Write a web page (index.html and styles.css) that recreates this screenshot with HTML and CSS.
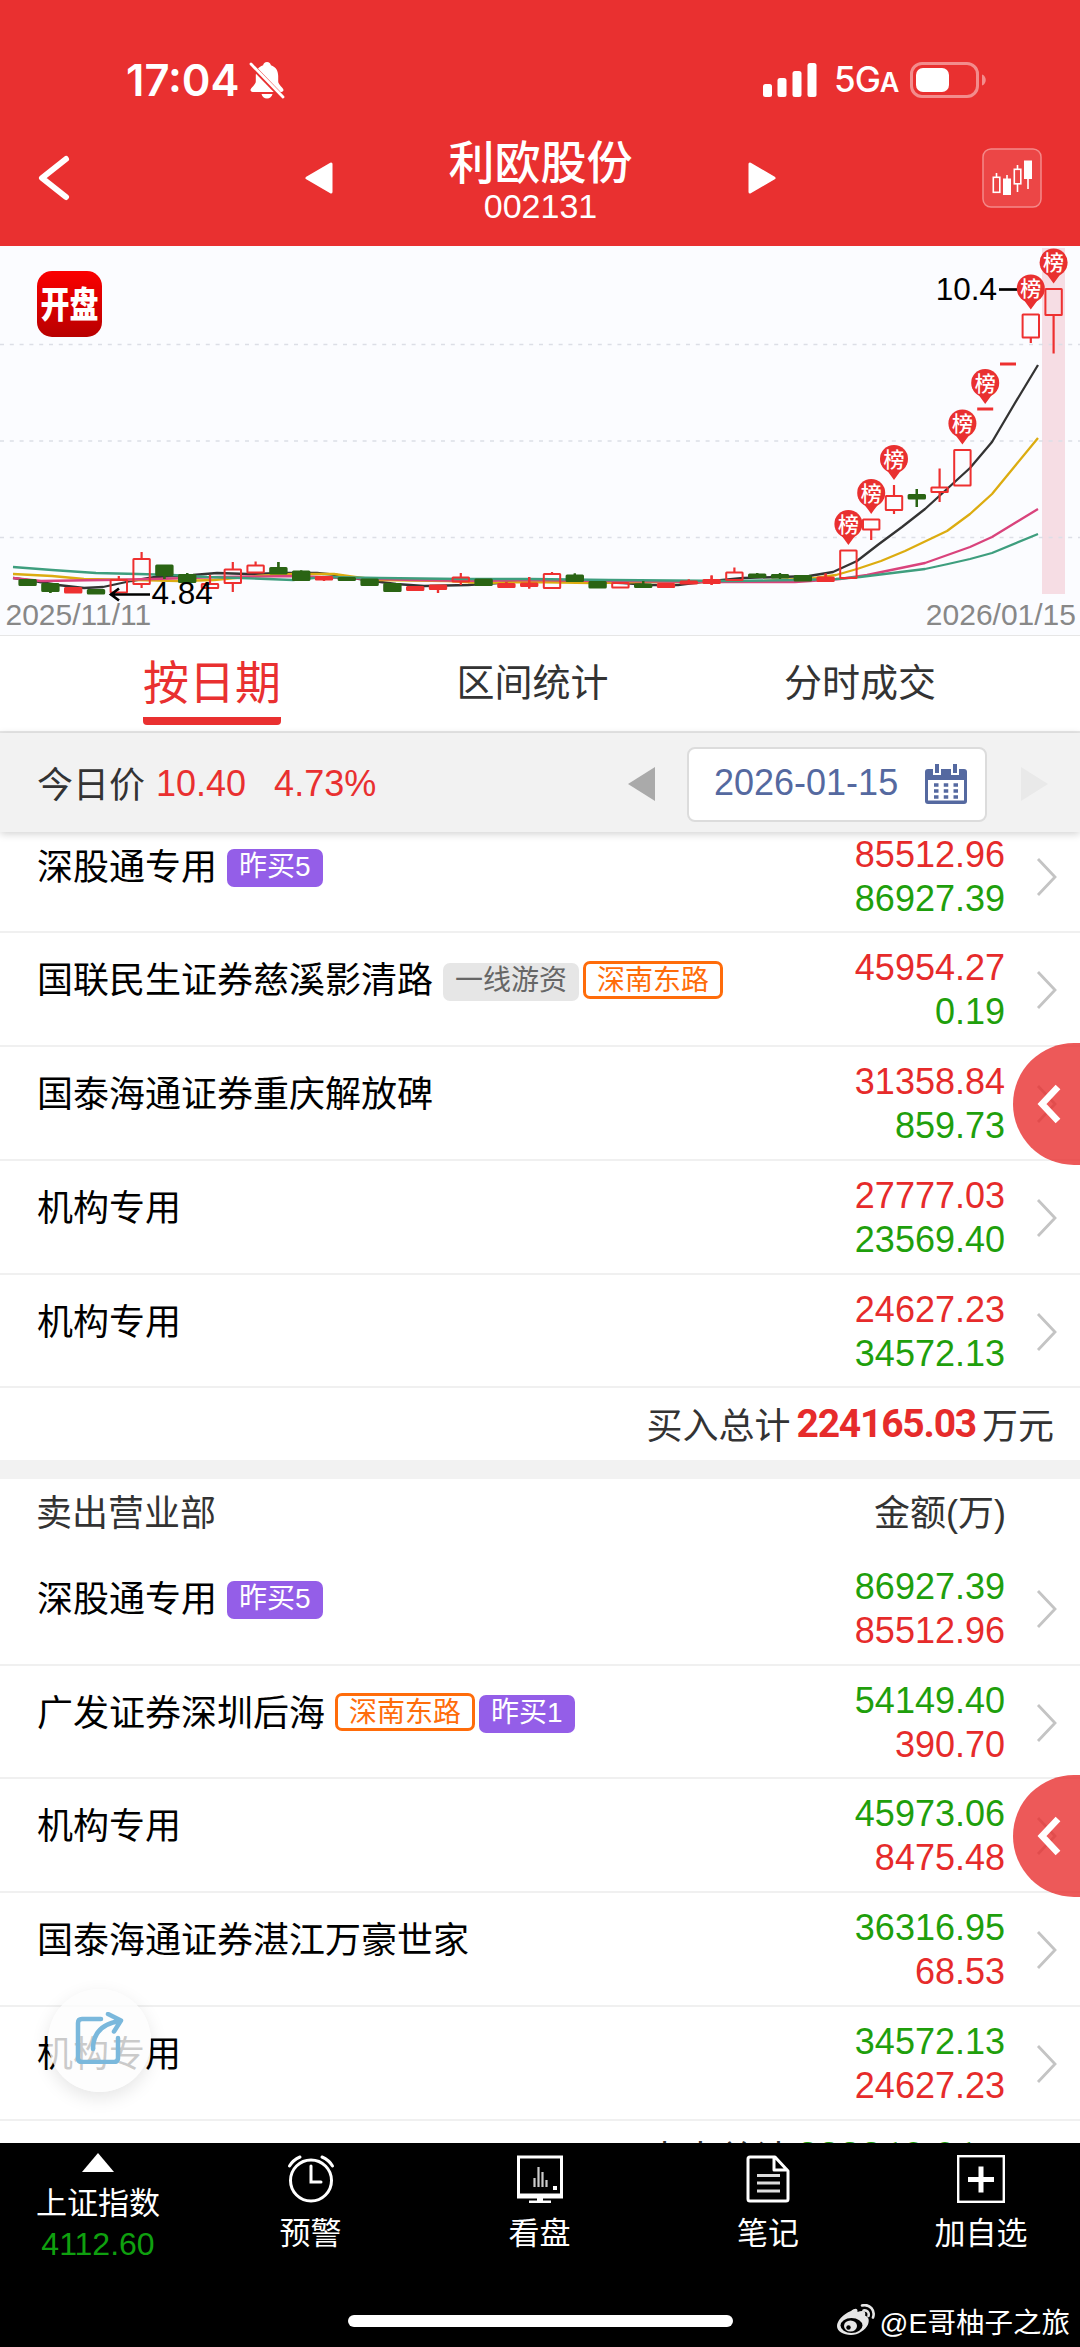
FILE: index.html
```html
<!DOCTYPE html>
<html lang="zh-CN">
<head>
  <meta charset="UTF-8" />
  <title>利欧股份 002131</title>
  <link rel="stylesheet" href="styles.css">
</head>
<body>
  <div class="screen">
    <header class="header">
      <div class="status-bar">
        <span class="time">17:04</span>
        <svg class="bell" width="36" height="38" viewBox="0 0 36 38">
          <path d="M18 1c-2.2 0-3.6 1.4-3.9 3.2C9 5.800 6.800 9.800 6.800 15v5.500c0 3-5.300 6.500-5.300 8.600 0 1.100.8 1.900 2.200 1.900h28.600c1.400 0 2.200-.8 2.200-1.900 0-2.100-5.300-5.600-5.300-8.600V15c0-5.200-2.200-9.200-7.300-10.800C21.600 2.400 20.200 1 18 1zM12.500 33c.5 2.600 2.700 4.500 5.500 4.500s5-1.900 5.500-4.500z" fill="#fff"/>
          <path d="M-1 1l36 37" stroke="#e93030" stroke-width="5"/>
          <path d="M2 3l32 33" stroke="#fff" stroke-width="2.800" stroke-linecap="round"/>
        </svg>
        <span class="spacer"></span>
        <svg width="54" height="34" viewBox="0 0 54 34" fill="#fff">
          <rect x="0" y="21" width="9" height="13" rx="2.500"/>
          <rect x="14.500" y="15" width="9" height="19" rx="2.500"/>
          <rect x="29.500" y="8" width="9" height="26" rx="2.500"/>
          <rect x="44.500" y="0" width="9" height="34" rx="2.500"/>
        </svg>
        <span class="network">5G<small>A</small></span>
        <svg class="battery" width="77" height="36" viewBox="0 0 77 36">
          <rect x="1.500" y="1.500" width="66" height="33" rx="10.500" fill="none" stroke="#f38c8c" stroke-width="3"/>
          <rect x="6" y="6" width="33" height="24" rx="7" fill="#fff"/>
          <path d="M72 12.500c5 1.500 5 9.500 0 11z" fill="#f38c8c"/>
        </svg>
      </div>
      <div class="title-bar">
        <svg class="back" width="36" height="50" viewBox="0 0 36 50"><path d="M31 6L7 25l24 19" fill="none" stroke="#fff" stroke-width="6" stroke-linecap="round" stroke-linejoin="round"/></svg>
        <svg width="28" height="32" viewBox="0 0 28 32"><path d="M26 2v28L2 16z" fill="#fff" stroke="#fff" stroke-width="3" stroke-linejoin="round"/></svg>
        <div class="stock">
          <h1>利欧股份</h1>
          <p>002131</p>
        </div>
        <svg width="28" height="32" viewBox="0 0 28 32"><path d="M2 2v28l24-14z" fill="#fff" stroke="#fff" stroke-width="3" stroke-linejoin="round"/></svg>
        <svg class="kline-btn" width="60" height="60" viewBox="0 0 60 60">
          <rect x="1" y="1" width="58" height="58" rx="8" fill="#ec4646" stroke="#f48989" stroke-width="1.500"/>
          <g stroke="#fff" stroke-width="1.600" fill="none">
            <path d="M14.500 25v4M25 27v4M35.500 17v4M35.500 36v8M46 30v11"/>
            <rect x="11.300" y="29.300" width="6.500" height="15"/>
            <rect x="32.300" y="21.300" width="6.500" height="14.500"/>
          </g>
          <path d="M21 30.500h8v16.500h-8zM42 12.500h8v18.500h-8z" fill="#fff"/>
        </svg>
      </div>
    </header>

    <section class="chart">
      <svg id="kline" width="1080" height="389" viewBox="0 0 1080 389"></svg>
      <div class="app-logo"><span>开盘</span></div>
    </section>

    <nav class="tabs">
      <a class="tab active">按日期</a>
      <a class="tab">区间统计</a>
      <a class="tab">分时成交</a>
    </nav>

    <section class="price-bar">
      <span class="label">今日价</span>
      <span class="price">10.40</span>
      <span class="change">4.73%</span>
      <span class="spacer"></span>
      <svg width="28" height="34" viewBox="0 0 28 34"><path d="M27 0v34L0 17z" fill="#aaa"/></svg>
      <div class="date-box">
        <span>2026-01-15</span>
        <svg width="42" height="40" viewBox="0 0 42 40">
          <path d="M3 5h36q3 0 3 3v29q0 3-3 3H3q-3 0-3-3V8q0-3 3-3z" fill="#5569a0"/>
          <path d="M8 0h8v11H8zM26 0h8v11h-8z" fill="#fff"/>
          <path d="M10 0h4v9h-4zM28 0h4v9h-4z" fill="#5569a0"/>
          <path d="M3 16h36v20.500H3z" fill="#fff"/>
          <path d="M9 21h24M9 27h24M9 33h24" stroke="#5569a0" stroke-width="3.500" stroke-dasharray="4.500 5.250"/>
        </svg>
      </div>
      <svg width="28" height="34" viewBox="0 0 28 34"><path d="M1 0v34l27-17z" fill="#e9e9e9"/></svg>
    </section>

    <main class="content">
      <section class="list buy" id="buyList"></section>
      <div class="total">买入总计<b class="red">224165.03</b>万元</div>
      <div class="divider"></div>
      <div class="list-head"><span>卖出营业部</span><span>金额(万)</span></div>
      <section class="list sell" id="sellList"></section>
      <div class="total">卖出总计<b class="green">222210.01</b>万元</div>
    </main>

    <footer class="toolbar">
      <div class="index">
        <svg width="32" height="19" viewBox="0 0 32 19"><path d="M16 0l16 19H0z" fill="#fff"/></svg>
        <span>上证指数</span>
        <span class="value">4112.60</span>
      </div>
      <div class="tool">
        <svg width="48" height="48" viewBox="0 0 48 48" fill="none" stroke="#fff" stroke-width="3" stroke-linecap="round">
          <circle cx="24" cy="25.500" r="20.500"/>
          <path d="M24 11v16h10M2.500 11Q6 5 13 2M45.500 11Q42 5 35 2"/>
        </svg>
        <span>预警</span>
      </div>
      <div class="tool">
        <svg width="48" height="48" viewBox="0 0 48 48">
          <path d="M2.500 2h43v40h-43z" fill="none" stroke="#fff" stroke-width="3"/>
          <path d="M2 38.500h44V43H2zM21 43h6v3h-6zM13 45.500h22V48H13zM37 31h4v4h-4z" fill="#fff"/>
          <path d="M18.500 32v-9M22.500 32V12M26.500 32V17M30.500 32v-7" stroke="#ccc" stroke-width="2.200"/>
        </svg>
        <span>看盘</span>
      </div>
      <div class="tool">
        <svg width="48" height="48" viewBox="0 0 48 48" fill="none" stroke="#fff" stroke-width="3" stroke-linejoin="round">
          <path d="M6 2h25l13 14v28q0 2-2 2H6q-2 0-2-2V4q0-2 2-2zM30 2v13h14"/>
          <path d="M13 20.500h23M13 28h23M13 36h23" stroke="#ddd"/>
        </svg>
        <span>笔记</span>
      </div>
      <div class="tool">
        <svg width="48" height="48" viewBox="0 0 48 48">
          <rect x="1.200" y="1.200" width="45.600" height="45.600" fill="none" stroke="#fff" stroke-width="2.400"/>
          <path d="M24 11.500v26M11 24.500h26" stroke="#fff" stroke-width="5"/>
        </svg>
        <span>加自选</span>
      </div>
    </footer>

    <!-- floating layer -->
    <div class="side-btn side-buy"><svg width="26" height="40" viewBox="0 0 26 40"><path d="M23 3L7 20l16 17" fill="none" stroke="#fff" stroke-width="6.500"/></svg></div>
    <div class="side-btn side-sell"><svg width="26" height="40" viewBox="0 0 26 40"><path d="M23 3L7 20l16 17" fill="none" stroke="#fff" stroke-width="6.500"/></svg></div>
    <div class="share-btn">
      <svg width="50" height="52" viewBox="0 0 50 52" fill="none" stroke="#7ab8dc" stroke-width="4.500" stroke-linecap="round" stroke-linejoin="round">
        <path d="M26 7H7q-4 0-4 4v35q0 4 4 4h32q4 0 4-4V26"/>
        <path d="M18 37Q18 13 45 9M33 2l13 6.500-7 11"/>
      </svg>
    </div>
    <div class="home-indicator"></div>
    <div class="watermark">
      <svg width="38" height="32" viewBox="0 0 38 32">
        <path d="M14 7c4-3.500 7-3 6.500 1 5-2 9-1 7.500 3.500 4 1.500 4.500 5 3 9C28.500 26 21 31 14 31 6.500 31 0 27.500 0 22 0 17 6 10 14 7z" fill="#e6e6e6"/>
        <ellipse cx="14.500" cy="21.500" rx="11" ry="7.500" fill="#000"/>
        <ellipse cx="13.500" cy="22" rx="6.500" ry="5.500" fill="#e6e6e6"/>
        <circle cx="11.500" cy="23.500" r="2.200" fill="#000"/>
        <path d="M25 1.500c8-2 13.500 5 11 12M26.500 6.500c3.500-.8 6 2 5 5.500" fill="none" stroke="#e6e6e6" stroke-width="2.600" stroke-linecap="round"/>
      </svg>
      <span>@E哥柚子之旅</span>
    </div>
  </div>

  <script>
    const RED = '#ee3030';
    const GREEN = '#2a6414';
    const STEP = 22.8;
    const FIRST = 27.6;

    // [type, top, bottom, high, low]  h = hollow, r = filled red, g = green, d = dash
    const candles = [
      ['g', 334, 339, 334, 339], ['g', 338, 345, 338, 347], ['r', 342, 346.5, 342, 347], ['g', 344, 347.5, 343, 348],
      ['h', 334, 346.5, 330, 347], ['h', 313, 338, 306, 342], ['g', 319.500, 329, 319, 333], ['g', 329, 336, 327, 336],
      ['h', 338, 342, 329, 342], ['h', 323.500, 337, 316, 346], ['h', 319.500, 326.500, 315.500, 327], ['g', 322, 327.500, 316, 328],
      ['g', 325.500, 334, 324.500, 334], ['r', 331, 333.500, 330, 335], ['g', 332, 334, 331, 335], ['g', 333.500, 339, 333, 339],
      ['g', 338, 345, 338, 345], ['r', 341, 344, 340, 344], ['r', 339.500, 343, 339, 347], ['h', 331.500, 335.500, 327, 339],
      ['g', 333.500, 339, 333, 339], ['r', 338, 341, 336, 342], ['r', 337.500, 340, 331, 342.500], ['h', 328, 342, 326, 342],
      ['g', 329.500, 335, 327.500, 335], ['g', 336, 341.500, 335, 342], ['h', 337, 341.500, 336, 342], ['g', 338.500, 341, 335, 341],
      ['r', 338, 341, 337, 341], ['r', 335.500, 337.500, 333.500, 338], ['r', 334, 337, 329.500, 339], ['h', 326.500, 334, 321.500, 334],
      ['g', 328.500, 331, 327, 332], ['g', 329, 331.500, 327, 333], ['g', 330, 334.500, 329, 335], ['r', 331.500, 335, 327.500, 336],
      ['h', 304.500, 332, 304, 332], ['h', 273.500, 283.500, 273, 294], ['h', 250, 264, 239, 268], ['g', 249, 252.500, 243, 261],
      ['h', 241.500, 246, 222.500, 256], ['h', 204, 239.500, 204, 239.500], ['d', 161.500, 164, 0, 0], ['d', 116.500, 119, 0, 0],
      ['h', 68.500, 91.500, 68, 97], ['h', 43, 69, 43, 107.500]
    ];

    // candle index -> centre of the pin
    const pins = { 36: 278, 37: 247, 38: 213, 41: 177.500, 42: 137, 44: 42.500, 45: 16.500 };

    const averages = {
      '#333': '13,332 34,335 58,339 84,342 103,341 131,335 155,331 193,329 217,327 248,328 282,327 317,327 337,329 365,334 396,338 424,340 468,339 499,337 530,334 574,335 623,337 650,339 678,339 702,336 743,332 781,331 809,330 833,326 857,315 879,298 902,281 925,263 947,243 970,222 992,196 1015,157 1038,119',
      '#dcac10': '13,328 52,330 84,333 138,334 179,335 214,334 258,330 293,328 334,328 355,331 379,334 448,335 482,337 530,336 592,337 643,336 712,336 764,335 815,332 836,329 857,323 881,315 905,305 947,285 970,268 992,248 1015,220 1038,192',
      '#d9437c': '13,332 41,335 103,334 155,333 220,331 293,330 344,332 413,334 482,335 530,334 609,335 712,336 795,336 840,333 867,329 925,317 970,301 992,291 1038,263',
      '#3e9e7e': '13,321 52,324 96,327 138,328 172,329 207,331 241,332 293,334 324,331 379,332 461,333 531,333 609,334 733,335 795,334 836,333 860,331 925,323 948,318 970,313 992,307 1038,288'
    };

    let svg = '<rect x="1042" y="2" width="23" height="346" fill="#f6dde4"/>';
    [98.500, 195, 291.500].forEach(y => {
      svg += `<path d="M0 ${y}H1080" stroke="#dcdee6" stroke-width="1.500" stroke-dasharray="4 5.800"/>`;
    });

    for (const color in averages) {
      svg += `<polyline points="${averages[color]}" fill="none" stroke="${color}" stroke-width="2.300" stroke-linejoin="round"/>`;
    }

    candles.forEach(([type, top, bottom, high, low], i) => {
      const x = FIRST + STEP * i;
      const color = type === 'g' ? GREEN : RED;
      if (type === 'd') {
        svg += `<rect x="${x - 8}" y="${top}" width="16" height="3" fill="${RED}"/>`;
        return;
      }
      svg += `<path d="M${x} ${high}V${top}M${x} ${bottom}V${low}" stroke="${color}" stroke-width="2.200"/>`;
      if (type !== 'h') svg += `<path d="M${x} ${high}V${low}" stroke="${color}" stroke-width="2.200"/>`;
      svg += `<rect x="${x - 8.200}" y="${top}" width="16.400" height="${bottom - top}" rx=".5" fill="${type === 'h' ? 'none' : color}" stroke="${color}" stroke-width="2"/>`;
    });

    svg += '<path d="M110 348.500H150M119 342.500l-8 6 8 6" fill="none" stroke="#000" stroke-width="2.700"/>';
    svg += '<text x="151.500" y="358" class="mark">4.84</text>';
    svg += '<path d="M999 43.500h20" stroke="#000" stroke-width="2.700"/>';
    svg += '<text x="997" y="54" class="mark end">10.4</text>';

    for (const i in pins) {
      const x = FIRST + STEP * i;
      const y = pins[i];
      svg += `<path d="M${x - 13} ${y + 5}Q${x - 6} ${y + 12} ${x} ${y + 21}Q${x + 6} ${y + 12} ${x + 13} ${y + 5}z" fill="#e93030"/>`;
      svg += `<circle cx="${x}" cy="${y}" r="14" fill="#e93030"/>`;
      svg += `<text x="${x}" y="${y + 7.500}" class="pin">榜</text>`;
    }

    svg += '<text x="5.500" y="378.500" class="date">2025/11/11</text>';
    svg += '<text x="1076" y="378.500" class="date end">2026/01/15</text>';
    document.getElementById('kline').innerHTML = svg;

    const buyRows = [
      ['深股通专用', '85512.96', '86927.39', [['purple', '昨买5']]],
      ['国联民生证券慈溪影清路', '45954.27', '0.19', [['gray', '一线游资'], ['orange', '深南东路']]],
      ['国泰海通证券重庆解放碑', '31358.84', '859.73', []],
      ['机构专用', '27777.03', '23569.40', []],
      ['机构专用', '24627.23', '34572.13', []]
    ];
    const sellRows = [
      ['深股通专用', '86927.39', '85512.96', [['purple', '昨买5']]],
      ['广发证券深圳后海', '54149.40', '390.70', [['orange', '深南东路'], ['purple', '昨买1']]],
      ['机构专用', '45973.06', '8475.48', []],
      ['国泰海通证券湛江万豪世家', '36316.95', '68.53', []],
      ['机构专用', '34572.13', '24627.23', []]
    ];

    function renderRows(id, rows) {
      document.getElementById(id).innerHTML = rows.map(([name, first, second, tags]) => `
        <div class="row">
          <div class="name"><span>${name}</span>${tags.map(([cls, text]) => `<i class="tag ${cls}">${text}</i>`).join('')}</div>
          <div class="amounts"><span>${first}</span><span>${second}</span></div>
          <svg class="arrow" width="22" height="38" viewBox="0 0 22 38"><path d="M2 1l17 18L2 37" fill="none" stroke="#c4c4c4" stroke-width="2.800"/></svg>
        </div>`).join('');
    }

    renderRows('buyList', buyRows);
    renderRows('sellList', sellRows);
  </script>
</body>
</html>
```

FILE: styles.css
```css
* {
  box-sizing: border-box;
}
body {
  margin: 0;
  background: #fff;
  font-family: "Liberation Sans", "Noto Sans CJK SC", sans-serif;
  color: #333;
}
h1, p {
  margin: 0;
}
svg {
  display: block;
  flex-shrink: 0;
}
.screen {
  position: relative;
  width: 1080px;
  height: 2347px;
  display: flex;
  flex-direction: column;
  overflow: hidden;
}
.spacer {
  flex: 1;
}
.red {
  color: #e62b2b;
}
.green {
  color: #1f9f0c;
}

/* Header */
.header {
  height: 246px;
  flex-shrink: 0;
  background: #e93030;
  color: #fff;
}
.status-bar {
  height: 110px;
  padding: 50px 93px 0 126px;
  display: flex;
  align-items: center;
}
.time {
  font: 600 43.5px/60px Inter, sans-serif;
  width: 123px;
  white-space: nowrap;
}
.network {
  font: 500 35px/60px Inter, sans-serif;
  margin-left: 17px;
  width: 76px;
  letter-spacing: -1px;
  padding-top: 2px;
}
.network small {
  font-size: 27px;
  font-weight: 600;
}
.title-bar {
  height: 136px;
  padding: 0 38px 0 35px;
  display: flex;
  align-items: center;
}
.back {
  margin-right: 234px;
}
.stock {
  width: 415px;
  text-align: center;
}
.stock h1 {
  font: 500 46px/56px "Noto Sans CJK SC", sans-serif;
}
.stock p {
  font-size: 34px;
  line-height: 38px;
}
.kline-btn {
  margin-left: auto;
}

/* Chart */
.chart {
  position: relative;
  height: 390px;
  flex-shrink: 0;
  background: #fbfcff;
  border-bottom: 1px solid #e6e6e6;
}
.app-logo {
  position: absolute;
  left: 37px;
  top: 25px;
  width: 65px;
  height: 66px;
  border-radius: 15px;
  background: linear-gradient(#fb0000, #b80000);
  color: #fff;
  font: 900 29px/63px "Noto Sans CJK SC", sans-serif;
  text-align: center;
}
.app-logo span {
  display: block;
  transform: scaleY(1.25);
}
.mark {
  font-size: 31.5px;
  fill: #000;
}
.date {
  font-size: 30px;
  fill: #888;
}
.end {
  text-anchor: end;
}
.pin {
  font: 500 21px "Noto Sans CJK SC", sans-serif;
  fill: #fff;
  text-anchor: middle;
}

/* Tabs */
.tabs {
  height: 97px;
  flex-shrink: 0;
  padding: 0 144px 0 143px;
  display: flex;
  justify-content: space-between;
  border-bottom: 2px solid #e8e8e8;
}
.tab {
  font-size: 38px;
  line-height: 94px;
  height: 89px;
}
.tab.active {
  font-size: 46px;
  color: #e93030;
  border-bottom: 8px solid #e93030;
  border-radius: 4px;
}

/* Price bar */
.price-bar {
  position: relative;
  z-index: 1;
  height: 99px;
  flex-shrink: 0;
  padding: 3px 32px 0 37px;
  display: flex;
  align-items: center;
  background: #f2f2f2;
  box-shadow: 0 2px 8px rgba(0, 0, 0, 0.18);
  font-size: 36px;
}
.label {
  padding-bottom: 5px;
}
.price, .change {
  color: #e93030;
  padding-bottom: 1px;
}
.price {
  margin: 0 28px 0 11px;
}
.date-box {
  width: 300px;
  height: 75px;
  margin: 0 33px 0 31px;
  padding: 0 18px 0 25px;
  display: flex;
  align-items: center;
  justify-content: space-between;
  background: #fff;
  border: 2px solid #dcdcdc;
  border-radius: 8px;
  color: #5569a0;
}
.date-box span {
  padding-bottom: 2px;
}

/* Broker lists */
.content {
  flex: 1;
  min-height: 0;
  overflow: hidden;
  margin-top: -12.4px;
}
.row {
  display: flex;
  height: 113.75px;
  padding: 0 22px 0 37px;
  border-bottom: 2px solid #f0f0f0;
}
.name {
  flex: 1;
  display: flex;
  align-items: center;
  height: 54px;
  margin-top: 19px;
  font-size: 36px;
  color: #000;
}
.name span {
  margin: -4px 10px 0 0;
}
.tag {
  height: 38px;
  margin: 5px 4px 0 0;
  padding: 0 12px;
  border-radius: 7px;
  font-size: 28px;
  font-style: normal;
  line-height: 36px;
}
.tag.purple {
  background: #945ee8;
  color: #fff;
}
.tag.gray {
  background: #e6e6e6;
  color: #666;
}
.tag.orange {
  margin-top: 1px;
  border: 3px solid #ff6c0a;
  padding: 0 11px;
  line-height: 33px;
  color: #ff6c0a;
}
.amounts {
  display: flex;
  flex-direction: column;
  padding-top: 13px;
  text-align: right;
  font-size: 36px;
  line-height: 44px;
}
.buy .amounts span:first-child,
.sell .amounts span:last-child {
  color: #e62b2b;
}
.buy .amounts span:last-child,
.sell .amounts span:first-child {
  color: #1f9f0c;
}
.arrow {
  margin: 38px 0 0 31px;
}
.total {
  height: 72px;
  padding: 0 26px 2px 0;
  display: flex;
  justify-content: flex-end;
  align-items: center;
  font-size: 36px;
}
.total b {
  font: 700 39px Roboto, sans-serif;
  letter-spacing: -1.2px;
  margin: 2px 6px 0;
}
.divider {
  height: 19px;
  background: #f2f2f2;
}
.list-head {
  display: flex;
  justify-content: space-between;
  height: 72.5px;
  padding: 0 74px 0 36px;
  font-size: 36px;
  line-height: 69px;
}

/* Bottom toolbar */
.toolbar {
  height: 204px;
  flex-shrink: 0;
  padding-top: 10px;
  display: grid;
  grid-template-columns: 196px 229px 229px 228px 1fr;
  background: #000;
  color: #fff;
  font-size: 31px;
}
.index, .tool {
  display: flex;
  flex-direction: column;
  align-items: center;
}
.index span {
  line-height: 40px;
}
.index span:nth-child(2) {
  margin-top: 12px;
}
.index .value {
  font-size: 32px;
  color: #0fa00f;
}
.tool svg {
  margin-top: 2px;
}
.tool span {
  margin-top: 11px;
  line-height: 40px;
}

/* Floating layer */
.side-btn {
  position: absolute;
  right: 0;
  width: 67px;
  height: 122px;
  border-radius: 61px 0 0 61px;
  background: rgba(233, 48, 48, 0.8);
  display: flex;
  align-items: center;
  padding-left: 22px;
  z-index: 2;
}
.side-buy {
  top: 1043px;
}
.side-sell {
  top: 1775px;
}
.share-btn {
  position: absolute;
  left: 48px;
  top: 1989px;
  width: 103px;
  height: 103px;
  border-radius: 50%;
  background: rgba(252, 252, 252, 0.8);
  box-shadow: 0 6px 18px rgba(0, 0, 0, 0.1);
  display: flex;
  align-items: center;
  justify-content: center;
}
.share-btn svg {
  margin-bottom: 6px;
}
.home-indicator {
  position: absolute;
  left: 348px;
  top: 2315px;
  width: 385px;
  height: 12px;
  border-radius: 6px;
  background: #fff;
}
.watermark {
  position: absolute;
  right: 10px;
  top: 2299px;
  height: 42px;
  display: flex;
  align-items: center;
  gap: 5px;
  color: #fff;
  font-size: 28.5px;
  white-space: nowrap;
}
```
